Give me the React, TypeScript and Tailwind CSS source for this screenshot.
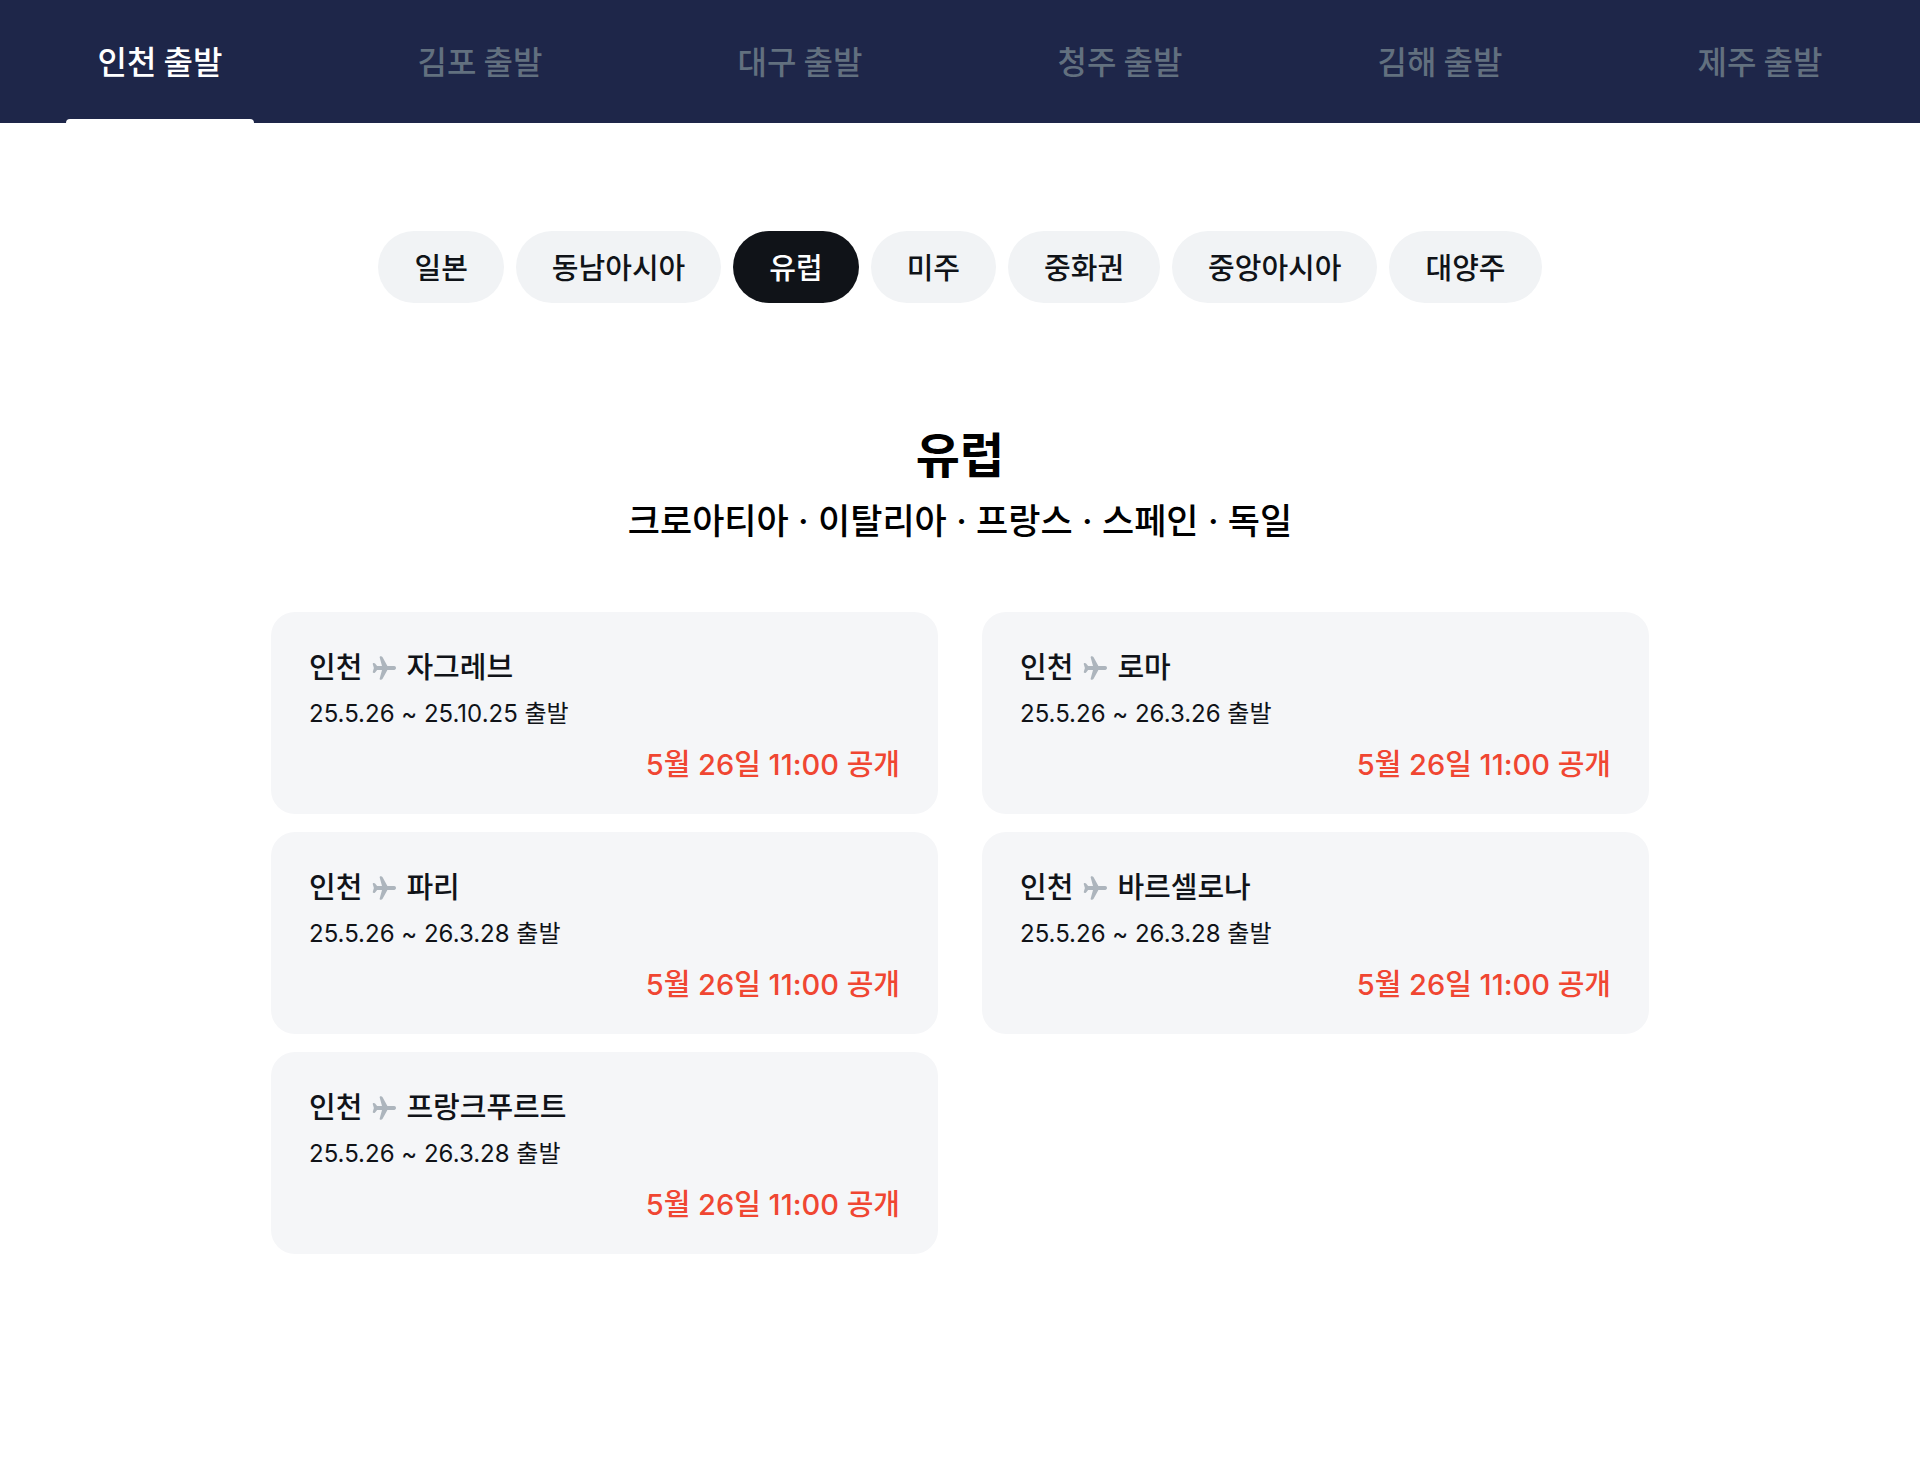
import { useState } from "react"

interface Flight {
  from: string
  to: string
  period: string
  openAt: string
}

const airports = ["인천 출발", "김포 출발", "대구 출발", "청주 출발", "김해 출발", "제주 출발"]

const regions = ["일본", "동남아시아", "유럽", "미주", "중화권", "중앙아시아", "대양주"]

const flights: Flight[] = [
  { from: "인천", to: "자그레브", period: "25.5.26 ~ 25.10.25 출발", openAt: "5월 26일 11:00 공개" },
  { from: "인천", to: "로마", period: "25.5.26 ~ 26.3.26 출발", openAt: "5월 26일 11:00 공개" },
  { from: "인천", to: "파리", period: "25.5.26 ~ 26.3.28 출발", openAt: "5월 26일 11:00 공개" },
  { from: "인천", to: "바르셀로나", period: "25.5.26 ~ 26.3.28 출발", openAt: "5월 26일 11:00 공개" },
  { from: "인천", to: "프랑크푸르트", period: "25.5.26 ~ 26.3.28 출발", openAt: "5월 26일 11:00 공개" },
]

function PlaneIcon() {
  return (
    <svg viewBox="0 0 24 24" className="size-6 text-[#adb5bd]" fill="currentColor" aria-hidden="true">
      <path d="M22.2 10.1h-6.8L10.6 1.3C10.2.6 9.6.2 8.8.2c-.9 0-1.3.6-1.1 1.4l2.3 8.5H5.1L3.1 7.6c-.3-.4-.8-.6-1.3-.6-.8 0-1.2.5-1 1.2L1.9 12 .8 15.8c-.2.7.2 1.2 1 1.2.5 0 1-.2 1.3-.6l2-2.5H10l-2.3 8.5c-.2.8.2 1.4 1.1 1.4.8 0 1.4-.4 1.8-1.1l4.8-8.8h6.8c1.1 0 1.8-.8 1.8-1.9s-.7-1.9-1.8-1.9z" />
    </svg>
  )
}

export default function App() {
  const [airport, setAirport] = useState("인천 출발")
  const [region, setRegion] = useState("유럽")

  return (
    <div className="min-h-screen bg-white pb-20 font-['Inter','Noto_Sans_CJK_KR',sans-serif] text-[#101318]">
      {/* Departure airports */}
      <nav className="grid grid-cols-6 bg-[#1e2649] font-['Noto_Sans_CJK_KR',sans-serif]">
        {airports.map((name) => (
          <button
            key={name}
            onClick={() => setAirport(name)}
            className={`mx-auto flex h-[123px] cursor-pointer flex-col items-center text-[32px] font-medium ${
              name === airport ? "text-white" : "text-[#62707f]"
            }`}
          >
            <span className="flex flex-1 items-center px-8">{name}</span>
            <span className={`h-1 w-full rounded-t ${name === airport ? "bg-white" : ""}`} />
          </button>
        ))}
      </nav>

      {/* Regions */}
      <div className="mt-27 flex flex-wrap justify-center gap-3 font-['Noto_Sans_CJK_KR',sans-serif]">
        {regions.map((name) => (
          <button
            key={name}
            onClick={() => setRegion(name)}
            className={`h-18 cursor-pointer rounded-full px-9 text-[29px] font-medium ${
              name === region ? "bg-[#101318] text-white" : "bg-[#f1f3f5]"
            }`}
          >
            {name}
          </button>
        ))}
      </div>

      <div className="mt-31 text-center text-black">
        <h1 className="text-[48px] leading-[58px] font-bold">{region}</h1>
        <p className="mt-3 text-[35px] leading-[48px] font-medium">
          크로아티아 · 이탈리아 · 프랑스 · 스페인 · 독일
        </p>
      </div>

      {/* Flights */}
      <ul className="mx-auto mt-[67px] grid max-w-[1378px] grid-cols-2 gap-x-11 gap-y-[18px]">
        {flights.map((flight) => (
          <li key={flight.to} className="rounded-3xl bg-[#f5f6f8] px-[38px] pt-9 pb-7">
            <h2 className="flex items-center gap-2.5 text-[29px] leading-10 font-medium">
              {flight.from}
              <PlaneIcon />
              {flight.to}
            </h2>
            <p className="mt-2 text-[24px] leading-9">{flight.period}</p>
            <p className="mt-3 text-right text-[29px] leading-[42px] font-medium text-[#f04632]">
              {flight.openAt}
            </p>
          </li>
        ))}
      </ul>
    </div>
  )
}
